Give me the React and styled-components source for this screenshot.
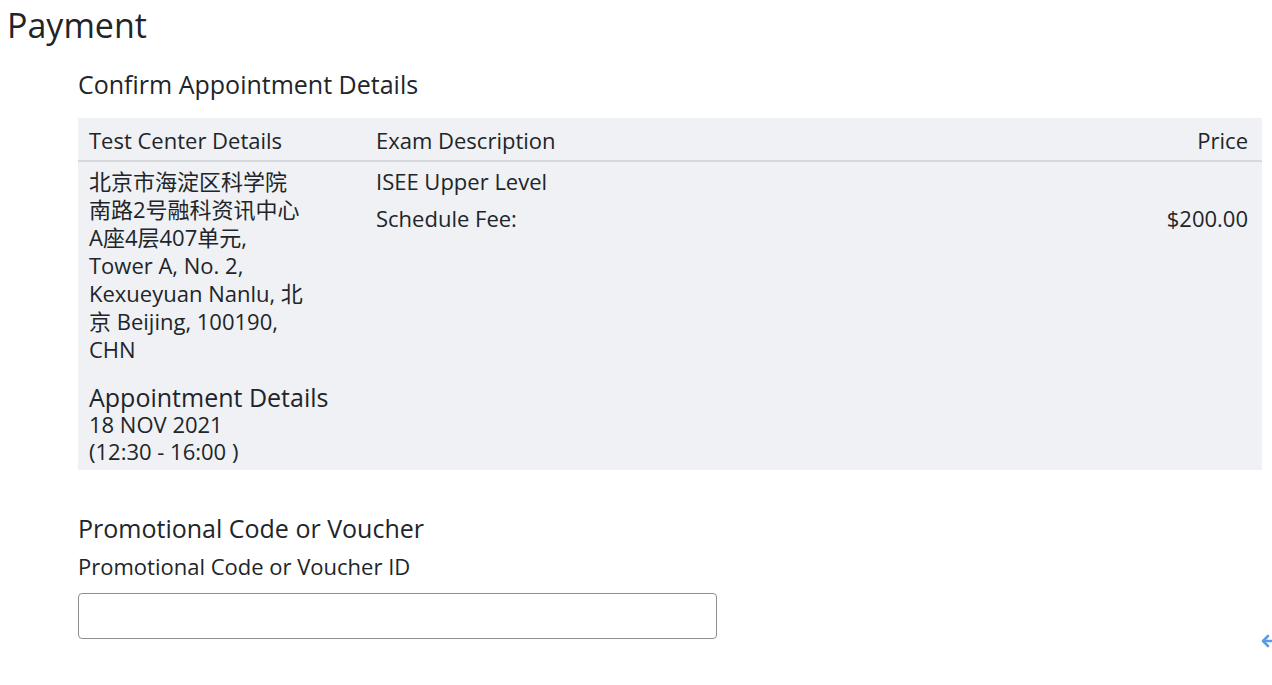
import React from 'react';
import styled, { createGlobalStyle } from 'styled-components';

const GlobalStyle = createGlobalStyle`
  html, body {
    margin: 0;
    padding: 0;
    background: #fff;
  }
  body {
    font-family: "Open Sans", "Noto Sans CJK SC", sans-serif;
    color: #212529;
    overflow: hidden;
  }
`;

const addressLines = [
  '北京市海淀区科学院',
  '南路2号融科资讯中心',
  'A座4层407单元,',
  'Tower A, No. 2,',
  'Kexueyuan Nanlu, 北',
  '京 Beijing, 100190,',
  'CHN',
];

const Page = styled.div`
  position: relative;
  width: 1272px;
  height: 685px;
  padding: 3px 0 0 7px;
  box-sizing: border-box;
`;

const Title = styled.h1`
  margin: 0;
  font-size: 34px;
  font-weight: 400;
  line-height: 44px;
`;

const Section = styled.div`
  margin-left: 71px;
  width: 1184px;
`;

const SectionTitle = styled.h2`
  margin: ${p => p.$top || 0}px 0 0;
  font-size: 25px;
  font-weight: 400;
  line-height: 32px;
`;

const Table = styled.div`
  margin-top: 18px;
  background: #eff1f4;
  display: grid;
  grid-template-columns: 287px 1fr 200px;
`;

const HeadCell = styled.div`
  padding: 8px 11px 6px;
  font-size: 22px;
  line-height: 28px;
  border-bottom: 2px solid #d6d8db;
  text-align: ${p => (p.$right ? 'right' : 'left')};
  padding-right: ${p => (p.$right ? '14px' : '11px')};
`;

const Cell = styled.div`
  padding: 5px 11px 5px;
  font-size: 22px;
  line-height: 28px;
  text-align: ${p => (p.$right ? 'right' : 'left')};
  padding-right: ${p => (p.$right ? '14px' : '11px')};
`;

const ApptTitle = styled.div`
  margin-top: 20px;
  font-size: 25px;
  line-height: 28px;
`;

const Line = styled.div`
  line-height: ${p => p.$lh || 28}px;
  margin-top: ${p => p.$mt || 0}px;
  white-space: nowrap;
`;

const Label = styled.label`
  display: block;
  margin-top: 8px;
  font-size: 22px;
  line-height: 28px;
`;

const Input = styled.input`
  display: block;
  margin-top: 13px;
  width: 639px;
  height: 46px;
  box-sizing: border-box;
  border: 1px solid #8f8f8f;
  border-radius: 4px;
  background: #fff;
  font-size: 20px;
  padding: 0 12px;
  outline: none;
`;

const BackArrow = styled.div`
  position: absolute;
  right: -4px;
  top: 632px;
  width: 16px;
  height: 18px;
  color: #5b9be8;
`;

export default function App() {
  return (
    <Page>
      <GlobalStyle />
      <Title>Payment</Title>
      <Section>
        <SectionTitle $top={21}>Confirm Appointment Details</SectionTitle>
        <Table>
          <HeadCell>Test Center Details</HeadCell>
          <HeadCell>Exam Description</HeadCell>
          <HeadCell $right>Price</HeadCell>
          <Cell>
            {addressLines.map(line => (
              <Line key={line}>{line}</Line>
            ))}
            <ApptTitle>Appointment Details</ApptTitle>
            <Line $lh={27}>18 NOV 2021</Line>
            <Line $lh={27}>(12:30 - 16:00 )</Line>
          </Cell>
          <Cell>
            <Line>ISEE Upper Level</Line>
            <Line $mt={9}>Schedule Fee:</Line>
          </Cell>
          <Cell $right>
            <Line $mt={37}>$200.00</Line>
          </Cell>
        </Table>
        <SectionTitle $top={42}>Promotional Code or Voucher</SectionTitle>
        <Label htmlFor="promo">Promotional Code or Voucher ID</Label>
        <Input id="promo" type="text" />
      </Section>
      <BackArrow>
        <svg width="16" height="18" viewBox="0 0 16 18" fill="none" stroke="currentColor" strokeWidth="2.6" strokeLinecap="round" strokeLinejoin="round">
          <path d="M8 4 L3 9 L8 14" />
          <path d="M3.5 9 H14" />
        </svg>
      </BackArrow>
    </Page>
  );
}
